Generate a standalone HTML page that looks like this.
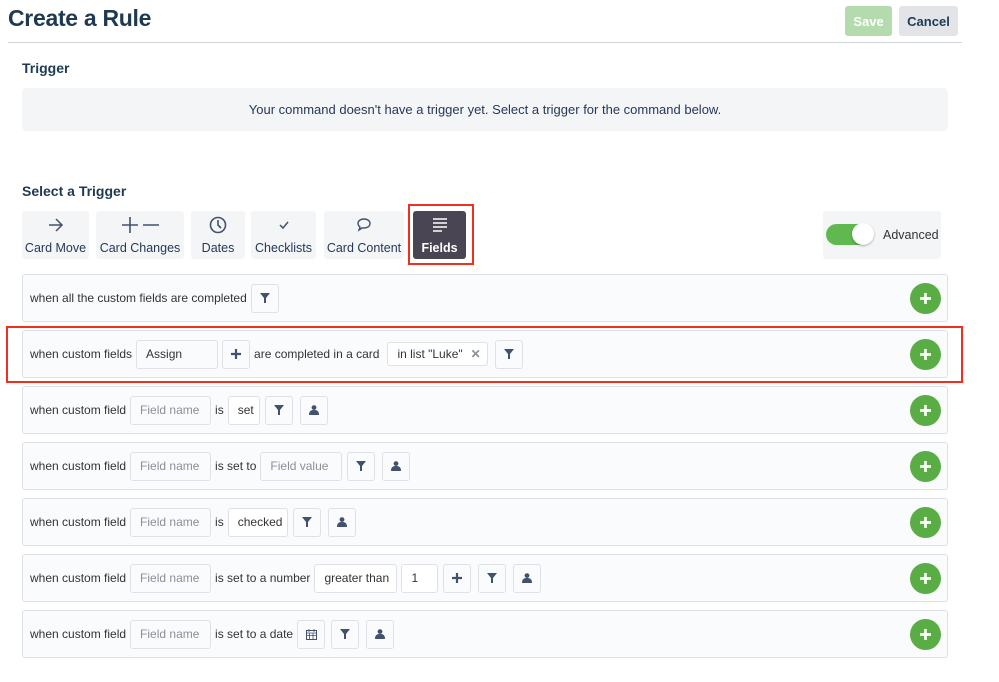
<!DOCTYPE html>
<html><head><meta charset="utf-8"><style>
*{box-sizing:border-box;margin:0;padding:0}
body{width:999px;height:682px;background:#fff;font-family:"Liberation Sans",sans-serif;color:#172b4d;position:relative;overflow:hidden}
.a{position:absolute}
h1{position:absolute;left:8px;top:5px;font-size:23px;font-weight:bold;color:#1f3a50;letter-spacing:-0.3px}
.btn{position:absolute;top:6px;height:30px;border-radius:3px;font-size:13px;font-weight:bold;display:flex;align-items:center;justify-content:center}
.lbl{position:absolute;left:22px;font-size:14px;font-weight:bold;color:#1f3a50}
.tb{position:absolute;top:211px;height:48px;background:#f4f5f7;border-radius:3px;font-size:12.5px;color:#253858;text-align:center;white-space:nowrap}
.tb svg{display:block;margin:5px auto 7px}
.row{position:absolute;left:22px;width:926px;height:48px;border:1px solid #dfe1e6;border-radius:3px;background:#fafbfc;display:flex;align-items:center;padding-left:7px;font-size:12px;color:#333;white-space:nowrap}
.row>*{flex-shrink:0}
.in{height:29px;border:1px solid #dfe1e6;border-radius:3px;background:#fff;display:flex;align-items:center;padding:0 9px;margin:0 4px;white-space:nowrap}
.ph{color:#8a8f98;background:#fafbfc;width:81px}
.ic{height:29px;width:28px;border:1px solid #dfe1e6;border-radius:3px;background:#fafbfc;display:flex;align-items:center;justify-content:center;margin-left:4px}
.plus{position:absolute;right:6px;top:8px;width:31px;height:31px;border-radius:50%;background:#5aac44;display:flex;align-items:center;justify-content:center}
</style></head><body>
<h1>Create a Rule</h1>
<div class="btn" style="left:845px;width:47px;background:#b3dbad;color:#fff">Save</div>
<div class="btn" style="left:899px;width:59px;background:#e2e4e8;color:#1f3a50">Cancel</div>
<div class="a" style="left:8px;top:42px;width:954px;height:1px;background:#d0d3d8"></div>
<div class="lbl" style="top:60px">Trigger</div>
<div class="a" style="left:22px;top:88px;width:926px;height:43px;background:#f4f5f7;border-radius:4px;font-size:13px;color:#253858;text-align:center;line-height:43px">Your command doesn't have a trigger yet. Select a trigger for the command below.</div>
<div class="lbl" style="top:183px">Select a Trigger</div>
<div class="tb" style="left:22px;width:67px"><svg width="18" height="18" viewBox="0 0 18 18"><path d="M2 9h13M9 3l6 6-6 6" stroke="#42526e" stroke-width="1.5" fill="none"/></svg>Card Move</div>
<div class="tb" style="left:96px;width:88px"><svg width="40" height="18" viewBox="0 0 40 18"><path d="M2 9h16M10 1v16M23 9h16" stroke="#42526e" stroke-width="1.6" fill="none"/></svg>Card Changes</div>
<div class="tb" style="left:191px;width:54px"><svg width="18" height="18" viewBox="0 0 18 18"><circle cx="9" cy="9" r="7.5" stroke="#42526e" stroke-width="1.6" fill="none"/><path d="M9 4v5l3 3" stroke="#42526e" stroke-width="1.6" fill="none"/></svg>Dates</div>
<div class="tb" style="left:251px;width:65px"><svg width="18" height="18" viewBox="0 0 18 18"><path d="M5 9l3 3 5-6" stroke="#42526e" stroke-width="1.5" fill="none"/></svg>Checklists</div>
<div class="tb" style="left:324px;width:80px"><svg width="18" height="18" viewBox="0 0 18 18"><path d="M3 7.5C3 4.5 6 3 9 3s6 1.5 6 4.5-3 4.5-6 4.5c-1 0-2 0-2 0L4 14l1-3C3.8 10 3 9 3 7.5z" stroke="#42526e" stroke-width="1.4" fill="none"/></svg>Card Content</div>
<div class="tb" style="left:413px;width:53px;background:#4a4553;color:#fff;font-weight:bold"><svg width="18" height="18" viewBox="0 0 18 18"><path d="M2 3h14M2 7h14M2 11h14M2 15h9" stroke="#fff" stroke-width="1.5"/></svg>Fields</div>
<div class="a" style="left:408px;top:204px;width:66px;height:61px;border:2px solid #f0301e"></div>
<div class="a" style="left:823px;top:211px;width:118px;height:48px;background:#f4f5f7;border-radius:3px"></div>
<div class="a" style="left:826px;top:224px;width:47px;height:21px;border-radius:11px;background:#5fb94f"></div>
<div class="a" style="left:852px;top:223px;width:22px;height:22px;border-radius:50%;background:#fff;box-shadow:0 1px 2px rgba(0,0,0,.3)"></div>
<div class="a" style="left:883px;top:228px;font-size:12.5px;color:#333">Advanced</div>

<svg width="0" height="0" style="position:absolute"><defs>
<symbol id="f" viewBox="0 0 10 10"><path d="M0 0h10L6 5v5H4V5z" fill="#42526e"/></symbol>
<symbol id="p" viewBox="0 0 10 10"><circle cx="5" cy="2.6" r="2.4" fill="#42526e"/><path d="M0 10c0-4 2-5 5-5s5 1 5 5z" fill="#42526e"/></symbol>
<symbol id="pl" viewBox="0 0 10 10"><path d="M5 0v10M0 5h10" stroke="#42526e" stroke-width="2.2"/></symbol>
<symbol id="g" viewBox="0 0 10 10"><path d="M5 0v10M0 5h10" stroke="#fff" stroke-width="2.4"/></symbol>
</defs></svg>

<div class="row" style="top:274px">when all the custom fields are completed<div class="ic"><svg width="10" height="10"><use href="#f"/></svg></div><div class="plus"><svg width="11" height="11"><use href="#g"/></svg></div></div>
<div class="row" style="top:330px">when custom fields<div class="in" style="width:82px;background:#fafbfc">Assign</div><div class="ic" style="margin:0 4px 0 0"><svg width="10" height="10"><use href="#pl"/></svg></div>are completed in a card<div class="in" style="width:101px;height:24px;margin-left:8px">in list "Luke"<span style="color:#8a8f98;margin-left:8px;font-weight:bold">✕</span></div><div class="ic" style="margin-left:3px"><svg width="10" height="10"><use href="#f"/></svg></div><div class="plus"><svg width="11" height="11"><use href="#g"/></svg></div></div>
<div class="a" style="left:6px;top:326px;width:957px;height:57px;border:2px solid #f0301e"></div>
<div class="row" style="top:386px">when custom field<div class="in ph">Field name</div>is<div class="in" style="width:32px">set</div><div class="ic" style="margin-left:1px"><svg width="10" height="10"><use href="#f"/></svg></div><div class="ic" style="margin-left:7px"><svg width="10" height="10"><use href="#p"/></svg></div><div class="plus"><svg width="11" height="11"><use href="#g"/></svg></div></div>
<div class="row" style="top:442px">when custom field<div class="in ph">Field name</div>is set to<div class="in ph" style="width:82px">Field value</div><div class="ic" style="margin-left:1px"><svg width="10" height="10"><use href="#f"/></svg></div><div class="ic" style="margin-left:7px"><svg width="10" height="10"><use href="#p"/></svg></div><div class="plus"><svg width="11" height="11"><use href="#g"/></svg></div></div>
<div class="row" style="top:498px">when custom field<div class="in ph">Field name</div>is<div class="in" style="width:60px">checked</div><div class="ic" style="margin-left:1px"><svg width="10" height="10"><use href="#f"/></svg></div><div class="ic" style="margin-left:7px"><svg width="10" height="10"><use href="#p"/></svg></div><div class="plus"><svg width="11" height="11"><use href="#g"/></svg></div></div>
<div class="row" style="top:554px">when custom field<div class="in ph">Field name</div>is set to a number<div class="in" style="width:83px">greater than</div><div class="in" style="width:37px;margin-left:0">1</div><div class="ic" style="margin-left:1px"><svg width="10" height="10"><use href="#pl"/></svg></div><div class="ic" style="margin-left:7px"><svg width="10" height="10"><use href="#f"/></svg></div><div class="ic" style="margin-left:7px"><svg width="10" height="10"><use href="#p"/></svg></div><div class="plus"><svg width="11" height="11"><use href="#g"/></svg></div></div>
<div class="row" style="top:610px">when custom field<div class="in ph">Field name</div>is set to a date<div class="ic" style="margin-left:4px"><svg width="11" height="11" viewBox="0 0 11 11"><rect x=".5" y="1.5" width="10" height="9" fill="none" stroke="#42526e"/><path d="M.5 4h10M3 0v3M8 0v3M3.5 4v6M7 4v6M.5 6.5h10" stroke="#42526e" stroke-width=".8"/></svg></div><div class="ic" style="margin-left:6px"><svg width="10" height="10"><use href="#f"/></svg></div><div class="ic" style="margin-left:7px"><svg width="10" height="10"><use href="#p"/></svg></div><div class="plus"><svg width="11" height="11"><use href="#g"/></svg></div></div>
</body></html>
